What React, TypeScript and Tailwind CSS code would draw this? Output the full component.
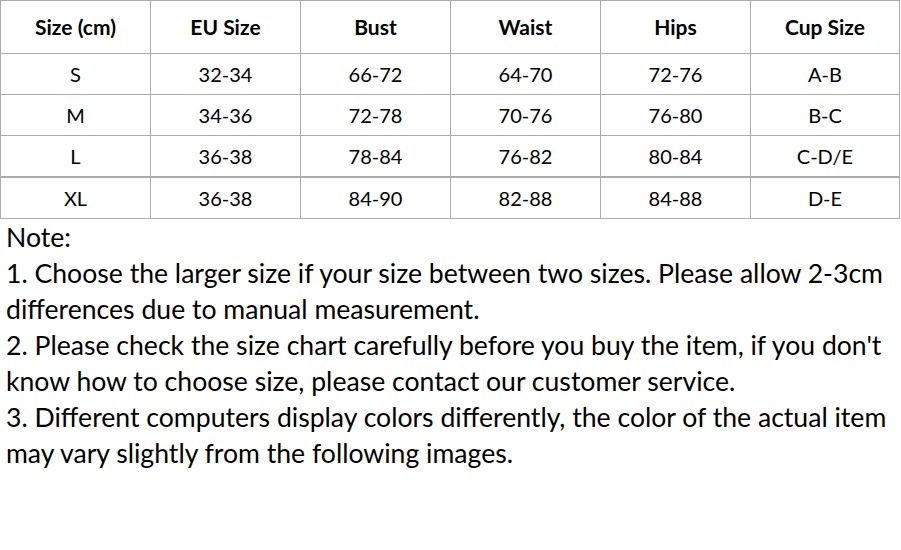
import React from "react";

const headers = ["Size (cm)", "EU Size", "Bust", "Waist", "Hips", "Cup Size"];

const rows = [
  ["S", "32-34", "66-72", "64-70", "72-76", "A-B"],
  ["M", "34-36", "72-78", "70-76", "76-80", "B-C"],
  ["L", "36-38", "78-84", "76-82", "80-84", "C-D/E"],
  ["XL", "36-38", "84-90", "82-88", "84-88", "D-E"],
];

const notes = [
  "Note:",
  "1. Choose the larger size if your size between two sizes. Please allow 2-3cm",
  "differences due to manual measurement.",
  "2. Please check the size chart carefully before you buy the item, if you don't",
  "know how to choose size, please contact our customer service.",
  "3. Different computers display colors differently, the color of the actual item",
  "may vary slightly from the following images.",
];

export default function App() {
  return (
    <div className="w-[901px] h-[550px] bg-white text-black font-['Lato',sans-serif]">
      <div className="grid w-[900px] grid-cols-[150px_150px_150px_150px_150px_149px] border-l border-t border-[#ababab]">
        {headers.map((h) => (
          <div
            key={h}
            className="flex h-[53px] items-center justify-center border-b border-r border-[#ababab] text-[21px] font-bold"
          >
            {h}
          </div>
        ))}
        {rows.map((row, i) =>
          row.map((cell, j) => (
            <div
              key={`${i}-${j}`}
              className={
                i === 2
                  ? "flex h-[42px] items-center justify-center border-b-2 border-r border-[#ababab] text-[20px]"
                  : "flex h-[41px] items-center justify-center border-b border-r border-[#ababab] text-[20px]"
              }
            >
              {cell}
            </div>
          ))
        )}
      </div>
      <div className="pl-[6px] text-[26.6px] leading-[36px]">
        {notes.map((line) => (
          <div key={line} className="whitespace-nowrap">
            {line}
          </div>
        ))}
      </div>
    </div>
  );
}
